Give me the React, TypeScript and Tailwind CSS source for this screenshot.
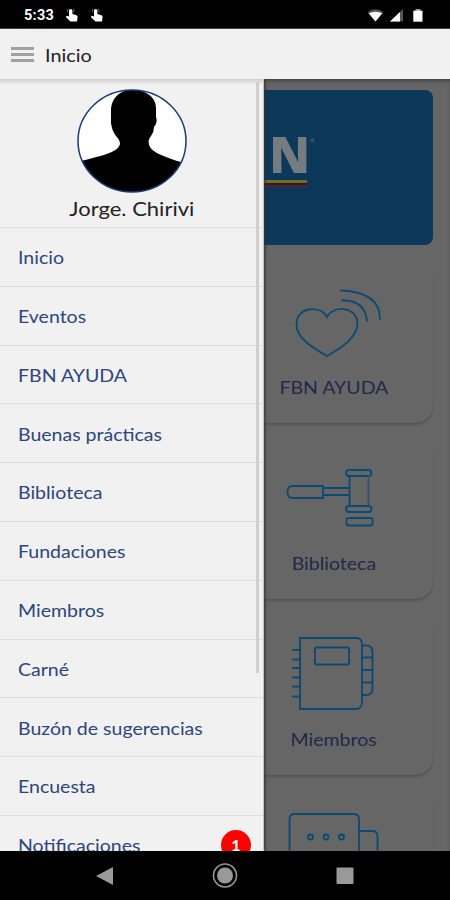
import React from "react";

interface MenuItem {
  label: string;
  badge?: number;
}

interface Tile {
  label: string;
  icon: React.ReactNode;
}

const menuItems: MenuItem[] = [
  { label: "Inicio" },
  { label: "Eventos" },
  { label: "FBN AYUDA" },
  { label: "Buenas prácticas" },
  { label: "Biblioteca" },
  { label: "Fundaciones" },
  { label: "Miembros" },
  { label: "Carné" },
  { label: "Buzón de sugerencias" },
  { label: "Encuesta" },
  { label: "Notificaciones", badge: 1 },
];

function TouchIcon() {
  return (
    <svg width="14" height="15" viewBox="0 0 14 15" fill="#fff">
      <path d="M4 2.600a1.700 1.700 0 0 1 3.400 0v3.400l4 1.200q1.400.5 1.200 1.800l-.6 4.500H5.500L.8 9l1-1.200 2.200.8z" />
      <path d="M2.500 4.200a3.500 3.500 0 0 1 .8-3.400M8.800 4.200a3.500 3.500 0 0 0-.6-3.400" stroke="#888" strokeWidth=".8" fill="none" />
    </svg>
  );
}

function StatusBar() {
  return (
    <div className="h-[29px] shrink-0 bg-black border-b border-[#444] flex items-center pl-6 pr-[26px] pt-0.5">
      <span className="text-white font-bold text-[14.500px] leading-5 pt-px tracking-[0.3px] font-['Roboto',sans-serif] w-[41px]">
        5:33
      </span>
      <TouchIcon />
      <span className="w-[11px]" />
      <TouchIcon />
      <div className="ml-auto flex items-center">
        <svg width="17" height="13" viewBox="0 0 17 13">
          <path d="M.5 3.2Q8.500-2.600 16.500 3.200L8.500 12.500z" fill="#555" />
          <path d="M1.800 4.300Q8.500 1 15.200 4.300L8.500 12.500z" fill="#fff" />
        </svg>
        <svg className="ml-[6px]" width="14" height="13" viewBox="0 0 14 13">
          <path d="M0 12.500 13 0v12.500z" fill="#555" />
          <path d="M0 12.500 10 3v9.500z" fill="#fff" />
        </svg>
        <svg className="ml-[9px] mr-px" width="10" height="13" viewBox="0 0 10 13">
          <path d="M2.500 0h5v2h-5z" fill="#999" />
          <path d="M.3 1.700h9.200v11H.3z" fill="#fff" />
        </svg>
      </div>
    </div>
  );
}

function HeartIcon() {
  return (
    <>
      <path d="M43 34C37 22 13 23 12.500 41C12 55 29 65 43 73C57 65 73.500 55 73.500 40C72.500 23 49 22 43 34Z" />
      <path d="M58 17.500Q81 17 83 38" />
      <path d="M57 7.500Q96 9 96 36" />
    </>
  );
}

function GavelIcon() {
  return (
    <>
      <path d="M39 27H9Q3.500 27 3.500 33T9 39H39ZM39 29H65M39 36H65" />
      <rect x="62" y="11" width="25.500" height="6" rx="3" />
      <path d="M65.500 17V47" />
      <path d="M84.500 17V47" stroke="#36506a" />
      <rect x="62" y="47" width="25.500" height="6" rx="3" />
      <rect x="62.500" y="59" width="26" height="7.500" rx="2" />
    </>
  );
}

function BookIcon() {
  return (
    <>
      <path d="M16 3H72Q78 3 78 9V67Q78 74 72 74H16Z" />
      <rect x="31" y="12.500" width="34" height="17" rx="1" />
      <path d="M9 15H16M9 24.500H16M9 33H16M9 42.500H16M9 51.500H16M9 61.500H16" />
      <path d="M78 10.500H82Q88.500 10.500 88.500 17V54Q88.500 60 82 60H78M78 22.500H88M78 35H88M78 47.500H88" />
    </>
  );
}

function ChatIcon() {
  return (
    <>
      <path d="M5.500 80V8Q5.500 3 11 3H69Q75 3 75 8V80" />
      <path d="M75 20H88Q93.500 20 93.500 25V80" />
      <circle cx="26.500" cy="26" r="2.500" />
      <circle cx="42" cy="26" r="2.500" />
      <circle cx="57.500" cy="26" r="2.500" />
    </>
  );
}

const tiles: Tile[] = [
  { label: "FBN AYUDA", icon: <HeartIcon /> },
  { label: "Biblioteca", icon: <GavelIcon /> },
  { label: "Miembros", icon: <BookIcon /> },
  { label: "", icon: <ChatIcon /> },
];

function Drawer() {
  return (
    <aside className="relative z-10 w-[264px] shrink-0 bg-[#f1f1f1] border-r border-[#c4c4c4] overflow-hidden shadow-[1px_0_3px_#333]">
      <div className="h-[149px] flex flex-col items-center border-b border-[#dcdcdc]">
        <div className="h-[10px] w-full bg-linear-to-b from-[#cfcfcf] to-[#f1f1f1] to-60%" />
        <svg className="shrink-0" width="110" height="104" viewBox="0 0 110 104">
          <defs>
            <clipPath id="avatar">
              <ellipse cx="55" cy="52" rx="54" ry="51" />
            </clipPath>
          </defs>
          <g clipPath="url(#avatar)">
            <rect width="110" height="104" fill="#fff" />
            <path d="M55 1C43 1 34 9 34 22L34 34Q35 42 39 47Q43 51 43 55C41 64 23 67 0 73V104H110V75C94 70 77 65 73 58C71 54 71 51 74 47Q77 43 77 38Q81 34 79 28V19C79 8 69 1 55 1Z" />
          </g>
          <ellipse cx="55" cy="52" rx="54" ry="51" fill="none" stroke="#173a78" strokeWidth="1.500" />
        </svg>
        <p className="text-[20px] leading-[26px] mt-[2px] scale-x-[1.1] text-[#222]">
          Jorge. Chirivi
        </p>
      </div>
      <nav>
        {menuItems.map((item) => (
          <a
            key={item.label}
            className="h-[58.800px] flex items-center justify-between pl-[18px] pr-[12px] border-b border-[#dcdcdc] text-[17.500px] text-[#2d4580]"
          >
            <span className="pt-[3px] origin-left scale-x-[1.115]">{item.label}</span>
            {item.badge && (
              <span className="size-[30px] rounded-full bg-[#ff0000] text-white text-[16px] font-bold flex items-center justify-center">
                {item.badge}
              </span>
            )}
          </a>
        ))}
      </nav>
      {/* scrollbar thumb */}
      <div className="absolute right-[4px] top-[3px] w-[3px] h-[591px] bg-[#d0d0d0]" />
    </aside>
  );
}

export default function App() {
  return (
    <div className="w-[450px] h-[900px] flex flex-col overflow-hidden bg-[#f1f1f1] font-['Lato',sans-serif]">
      <StatusBar />
      <header className="h-[50px] shrink-0 bg-[#f1f1f1] flex items-center pl-[11px] gap-[11px]">
        <div className="w-[23px] flex flex-col gap-[3px]">
          <div className="h-[3px] bg-[#a0a0a0]" />
          <div className="h-[3px] bg-[#a0a0a0]" />
          <div className="h-[3px] bg-[#a0a0a0]" />
        </div>
        <span className="text-[18px] text-[#222] origin-left scale-x-[1.1] pt-0.5">Inicio</span>
      </header>

      <div className="flex-1 min-h-0 flex overflow-hidden">
        <Drawer />
        <main className="flex-1 min-w-0 overflow-hidden bg-[#666] shadow-[inset_0_3px_4px_-2px_#333]">
          <div className="mt-[11px] mr-[17px] h-[155px] rounded-r-[8px] bg-[#0c3859] pt-[34px]">
            <div className="w-[43px] flex flex-col items-end">
              <div className="flex">
                <span className="font-['Open_Sans',sans-serif] font-extrabold text-[49px] leading-[60px] -mr-[3px] text-[#757b80]">
                  N
                </span>
                <span className="text-[6px] leading-3 ml-[3px] -mr-[9px] mt-[11px] w-[6px] text-[#5f6e7a]">®</span>
              </div>
              <div className="w-full h-[3px] bg-[#7b6a1c] -mt-[4px]" />
              <div className="w-full h-[2px] bg-[#211d33]" />
              <div className="w-full h-[2px] bg-[#5d1e2a]" />
            </div>
          </div>

          <div className="mt-[18px] flex flex-col gap-4">
            {tiles.map((tile, index) => (
              <div
                key={index}
                className="w-[200px] h-[160px] shrink-0 -ml-[31px] rounded-[18px] bg-[#666] shadow-[0_2px_2px_#555] flex flex-col items-center pt-5 pl-[2px]"
              >
                <svg
                  width="100"
                  height="80"
                  viewBox="0 0 100 80"
                  fill="none"
                  stroke="#0b4a74"
                  strokeWidth="1.800"
                  strokeLinecap="round"
                >
                  {tile.icon}
                </svg>
                <p className="mt-[13px] text-[17.500px] leading-6 scale-x-[1.115] text-[#22294a]">
                  {tile.label}
                </p>
              </div>
            ))}
          </div>
        </main>
      </div>

      <footer className="h-[49px] shrink-0 bg-black flex justify-center items-center">
        <svg width="260" height="26" viewBox="0 0 260 26" fill="#999">
          <path d="M1 13 18 4V22Z" />
          <circle cx="130" cy="12.500" r="8" />
          <circle cx="130" cy="12.500" r="11.500" fill="none" stroke="#999" strokeWidth="1.500" />
          <rect x="241.500" y="4.500" width="17" height="16.500" rx="1" />
        </svg>
      </footer>
    </div>
  );
}
